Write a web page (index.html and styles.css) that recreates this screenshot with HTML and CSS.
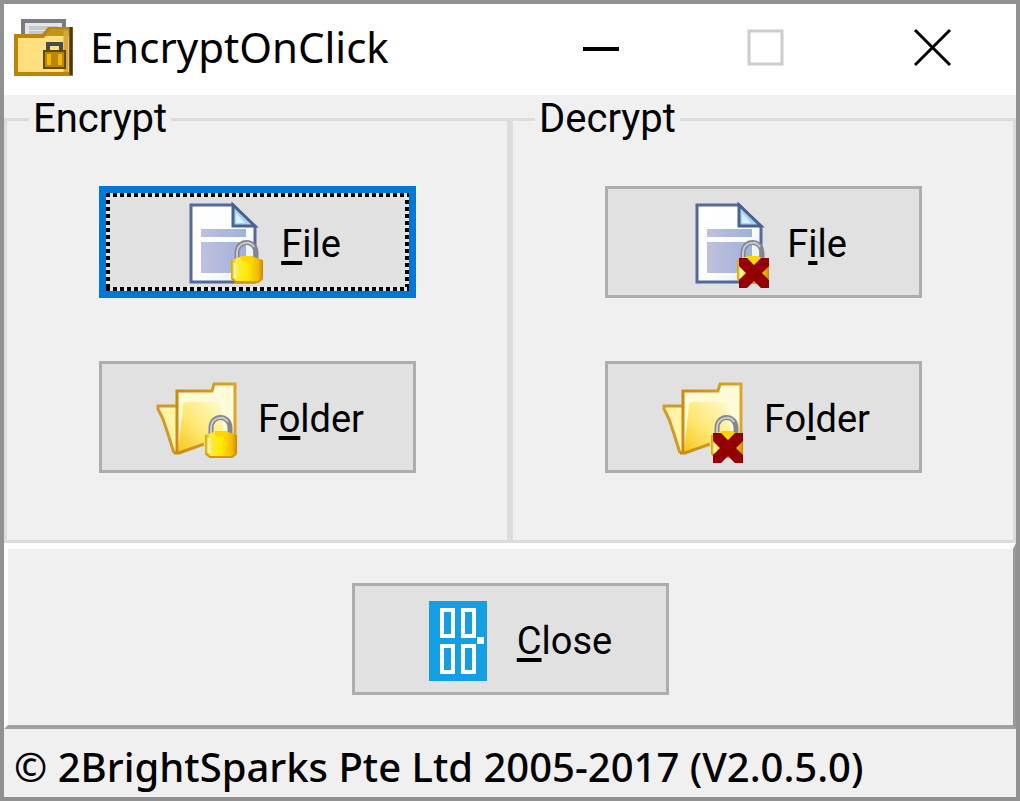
FILE: index.html
```html
<!DOCTYPE html>
<html lang="en">
<head>
    <meta charset="UTF-8">
    <meta name="viewport" content="width=device-width, initial-scale=1.0">
    <title>EncryptOnClick</title>
    <link rel="stylesheet" href="styles.css">
</head>
<body>
    <!-- Shared icon parts -->
    <svg class="defs" width="0" height="0" aria-hidden="true">
        <defs>
            <linearGradient id="gold" x1="0" x2="1">
                <stop offset="0" stop-color="#d9a300"/>
                <stop offset="0.15" stop-color="#ffe94a"/>
                <stop offset="0.5" stop-color="#ffea00"/>
                <stop offset="0.85" stop-color="#f2b705"/>
                <stop offset="1" stop-color="#c98a00"/>
            </linearGradient>
            <linearGradient id="paper" x1="0" y1="0" x2="1" y2="1">
                <stop offset="0" stop-color="#ffffff"/>
                <stop offset="0.6" stop-color="#fbfdff"/>
                <stop offset="1" stop-color="#d8eafb"/>
            </linearGradient>
            <linearGradient id="lines" x1="0" x2="1">
                <stop offset="0" stop-color="#c0c0dc"/>
                <stop offset="1" stop-color="#9fb2dc"/>
            </linearGradient>
            <linearGradient id="folderFront" x1="0" y1="1" x2="1" y2="0">
                <stop offset="0" stop-color="#f6c61c"/>
                <stop offset="0.45" stop-color="#ffe873"/>
                <stop offset="1" stop-color="#fffbd0"/>
            </linearGradient>
            <linearGradient id="edge" x1="0" x2="1">
                <stop offset="0" stop-color="#c98b12"/>
                <stop offset="1" stop-color="#d9a52c"/>
            </linearGradient>
            <symbol id="lock" viewBox="0 0 36 46">
                <path d="M8 21V14C8 0 27 0 27 14V21" fill="none" stroke="#84858c" stroke-width="5"/>
                <path d="M8 19V13C9 3 21 1 25 8" fill="none" stroke="#c9cbd2" stroke-width="2"/>
                <path d="M2 21L8 19L14 17H22L28 19L34 21V40L29 44H7L2 40Z" fill="url(#gold)"/>
                <path d="M12 17H24V21Q18 24 12 21Z" fill="#ffd400"/>
                <path d="M3 40L7 43H29L33 40" fill="none" stroke="#d39a00" stroke-width="2"/>
                <path d="M6 24V39" stroke="#fff59a" stroke-width="3"/>
            </symbol>
            <symbol id="cross" viewBox="0 0 30 30">
                <path d="M0 0H8L15 7L22 0H30V8L23 15L30 22V30H22L15 23L8 30H0V22L7 15L0 8Z" fill="#940000"/>
            </symbol>
            <symbol id="page" viewBox="0 0 92 92">
                <path d="M18 9H60L82 31V86H18Z" fill="url(#paper)" stroke="#54689c" stroke-width="3"/>
                <path d="M60 9V30H82Z" fill="#a8d4f0" stroke="#4c5f92" stroke-width="3"/>
                <path d="M63 17L72 27H63Z" fill="#d4f2ff"/>
                <rect x="28" y="33" width="45" height="8" fill="url(#lines)"/>
                <rect x="28" y="46" width="45" height="31" fill="url(#lines)"/>
            </symbol>
            <symbol id="folder" viewBox="0 0 92 92">
                <path d="M8 35H27V82H23L18 62L12 46Z" fill="#fff3a6"/>
                <path d="M26 35H8V38L13 48L18 63L24 82" fill="none" stroke="#cf9a2a" stroke-width="3"/>
                <path d="M27 20H62L64 13H85V66L53 74L27 82Z" fill="#fffbd8"/>
                <path d="M33 34Q33 31 37 31H66Q70 31 70 35L74 60L53 73L28 81Z" fill="url(#folderFront)"/>
                <path d="M24 82H29L54 73M27 82V20H62L64 13H85V66" fill="none" stroke="url(#edge)" stroke-width="3"/>
            </symbol>
        </defs>
    </svg>

    <div class="window">
        <header class="titlebar">
            <svg class="app-icon" viewBox="0 0 60 60" aria-hidden="true">
                <path d="M9 20V4H50V20" fill="#e4e6ea" stroke="#7c7c80" stroke-width="4"/>
                <path d="M15 11H44M15 16H40" stroke="#c5c8d0" stroke-width="4"/>
                <path d="M2 19H29L35 12H57V57H2Z" fill="#ffdf80" stroke="#b8860b" stroke-width="4"/>
                <path d="M31 19L37 12H56V19Z" fill="#c39416"/>
                <path d="M52 14V55" stroke="#d6a93a" stroke-width="5"/>
                <path d="M57 10V58" stroke="#4a3608" stroke-width="3"/>
                <path d="M34 36V27H47V36" fill="none" stroke="#4a4a48" stroke-width="4"/>
                <rect x="30" y="34" width="21" height="17" fill="#b8860b" stroke="#5f4a16" stroke-width="2"/>
                <path d="M35 37V48M46 37V48" stroke="#f5b800" stroke-width="4"/>
            </svg>
            <h1 class="title">EncryptOnClick</h1>
            <div class="controls">
                <button type="button" class="control" aria-label="Minimize">
                    <svg viewBox="0 0 40 40"><path d="M2 22H38" stroke="#000" stroke-width="4"/></svg>
                </button>
                <button type="button" class="control" aria-label="Maximize" disabled>
                    <svg viewBox="0 0 40 40"><rect x="2" y="4" width="33" height="33" fill="none" stroke="#ccc" stroke-width="3"/></svg>
                </button>
                <button type="button" class="control" aria-label="Close window">
                    <svg viewBox="0 0 40 40"><path d="M2 3L37 38M37 3L2 38" stroke="#000" stroke-width="3"/></svg>
                </button>
            </div>
        </header>

        <main class="groups">
            <fieldset class="group">
                <legend>Encrypt</legend>
                <button type="button" class="btn btn-default">
                    <svg class="icon" viewBox="0 0 92 92" aria-hidden="true">
                        <use href="#page"/>
                        <use href="#lock" x="56" y="43" width="36" height="46"/>
                    </svg>
                    <span><u>F</u>ile</span>
                </button>
                <button type="button" class="btn">
                    <svg class="icon" viewBox="0 0 92 92" aria-hidden="true">
                        <use href="#folder"/>
                        <use href="#lock" x="53" y="43" width="36" height="46"/>
                    </svg>
                    <span>F<u>o</u>lder</span>
                </button>
            </fieldset>
            <fieldset class="group">
                <legend>Decrypt</legend>
                <button type="button" class="btn">
                    <svg class="icon" viewBox="0 0 92 92" aria-hidden="true">
                        <use href="#page"/>
                        <use href="#lock" x="56" y="43" width="36" height="46"/>
                        <use href="#cross" x="60" y="62" width="30" height="30"/>
                    </svg>
                    <span>F<u>i</u>le</span>
                </button>
                <button type="button" class="btn">
                    <svg class="icon" viewBox="0 0 92 92" aria-hidden="true">
                        <use href="#folder"/>
                        <use href="#lock" x="53" y="43" width="36" height="46"/>
                        <use href="#cross" x="57" y="62" width="30" height="30"/>
                    </svg>
                    <span>Fo<u>l</u>der</span>
                </button>
            </fieldset>
        </main>

        <div class="actions">
            <button type="button" class="btn">
                <svg class="icon" viewBox="0 0 92 92" aria-hidden="true">
                    <rect x="20" y="8" width="58" height="80" fill="#159fe3"/>
                    <g fill="none" stroke="#fff" stroke-width="4">
                        <rect x="33" y="17" width="11" height="26"/>
                        <rect x="54" y="17" width="11" height="26"/>
                        <rect x="33" y="53" width="11" height="26"/>
                        <rect x="54" y="53" width="11" height="26"/>
                    </g>
                    <rect x="68" y="44" width="7" height="7" fill="#fff"/>
                </svg>
                <span><u>C</u>lose</span>
            </button>
        </div>

        <footer class="statusbar">© 2BrightSparks Pte Ltd 2005-2017 (V2.0.5.0)</footer>
    </div>
</body>
</html>
```
FILE: styles.css
```css
* {
    margin: 0;
    padding: 0;
    box-sizing: border-box;
}
body {
    font-family: Roboto, "Liberation Sans", Arial, sans-serif;
    font-size: 40px;
    line-height: 48px;
    color: #000;
    background: #f0f0f0;
}
button {
    font: inherit;
    color: inherit;
}
.defs {
    position: absolute;
}
.window {
    display: flex;
    flex-direction: column;
    min-height: 100vh;
    border: 4px solid #919191;
    background: #f0f0f0;
}

/* Title bar */
.titlebar {
    display: flex;
    align-items: center;
    height: 91px;
    padding: 0 0 5px 10px;
    background: #fff;
}
.app-icon {
    flex: none;
    width: 60px;
    height: 60px;
}
.title {
    margin-left: 16px;
    font-family: "Noto Sans", "Open Sans", sans-serif;
    font-size: 42px;
    font-weight: 400;
    white-space: nowrap;
}
.controls {
    display: flex;
    align-self: stretch;
    margin-left: auto;
}
.control {
    display: flex;
    align-items: center;
    justify-content: center;
    width: 166px;
    border: none;
    background: none;
}
.control svg {
    width: 40px;
    height: 40px;
}

/* Group boxes */
.groups {
    display: grid;
    grid-template-columns: 1fr 1fr;
    flex: 1;
}
.group {
    display: flex;
    flex-direction: column;
    align-items: center;
    gap: 63px;
    min-width: 0;
    border: 3px solid #dcdcdc;
    padding: 43px 0 62px;
}
.group legend {
    margin-left: 22px;
    padding: 0 4px;
}

/* Buttons */
.btn {
    display: flex;
    align-items: center;
    justify-content: center;
    gap: 16px;
    width: 317px;
    height: 112px;
    border: 3px solid #adadad;
    background: #e1e1e1;
    font-size: 38px;
}
.btn span {
    padding-top: 4px;
}
.btn u {
    text-decoration-thickness: 4px;
    text-underline-offset: 4px;
    text-decoration-skip-ink: none;
}
.btn-default {
    border: 7px solid #0078d7;
    background:
        repeating-linear-gradient(90deg, #000 0 4px, #e8e4e0 4px 7px) top / 100% 4px no-repeat,
        repeating-linear-gradient(90deg, #000 0 4px, #e8e4e0 4px 7px) bottom / 100% 4px no-repeat,
        repeating-linear-gradient(#000 0 4px, #e8e4e0 4px 7px) left / 4px 100% no-repeat,
        repeating-linear-gradient(#000 0 4px, #e8e4e0 4px 7px) right / 4px 100% no-repeat,
        #e1e1e1;
}
.icon {
    flex: none;
    width: 92px;
    height: 92px;
}

/* Bottom panel */
.actions {
    display: flex;
    justify-content: center;
    padding: 34px 0 30px;
    border-top: 6px solid #fff;
    border-left: 4px solid #fff;
    border-right: 3px solid #999;
    border-bottom: 4px solid #a0a0a0;
}
.statusbar {
    padding: 14px 10px 6px;
    font-family: "Noto Sans", "Open Sans", sans-serif;
    font-size: 40px;
    font-weight: 500;
    white-space: nowrap;
}
```
